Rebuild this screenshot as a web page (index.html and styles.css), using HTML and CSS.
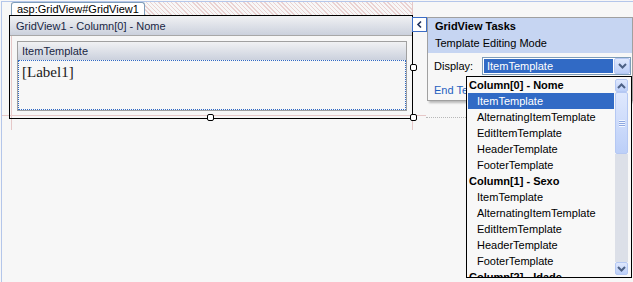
FILE: index.html
```html
<!DOCTYPE html>
<html lang="en">
<head>
  <meta charset="UTF-8" />
  <title>GridView Template Editing</title>
  <link rel="stylesheet" href="styles.css">
</head>
<body>
  <div class="surface">
    <div class="canvas">
      <div class="guide guide-h"></div>
      <div class="guide guide-v1"></div>
      <div class="guide guide-v2"></div>
      <div class="guide-dots"></div>

      <div class="tagrow"><span class="tag">asp:GridView#GridView1</span></div>
      <div class="grid-ctl">
        <div class="ctl-head">GridView1 - Column[0] - Nome</div>
        <div class="tmpl">
          <div class="tmpl-head">ItemTemplate</div>
          <div class="tmpl-body"><span class="label">[Label1]</span></div>
        </div>
        <span class="handle h-right"></span>
        <span class="handle h-bottom"></span>
        <span class="handle h-corner"></span>
      </div>
    </div>
  </div>

  <!-- smart tag popup -->
  <div class="smart">
    <div class="smart-btn">
      <svg width="13" height="13" viewBox="0 0 13 13"><polyline points="8,3.5 5,6.5 8,9.5" fill="none" stroke="#1d2f5a" stroke-width="1.6"/></svg>
    </div>
    <div class="tasks">
      <div class="tasks-head">
        <div class="tasks-title">GridView Tasks</div>
        <div>Template Editing Mode</div>
      </div>
      <div class="tasks-body">
        <div class="row">
          <span class="row-label">Display:</span>
          <div class="combo">
            <span class="combo-val">ItemTemplate</span>
            <span class="xp-btn combo-btn">
              <svg width="9" height="6" viewBox="0 0 9 6"><polyline points="1,1 4.5,4.5 8,1" fill="none" stroke="#4d6185" stroke-width="2"/></svg>
            </span>
          </div>
        </div>
        <a class="end-link">End Template Editing</a>
      </div>
    </div>
  </div>

  <!-- open dropdown -->
  <div class="list">
    <div class="items">
      <div class="opt grp">Column[0] - Nome</div>
      <div class="opt sel">ItemTemplate</div>
      <div class="opt">AlternatingItemTemplate</div>
      <div class="opt">EditItemTemplate</div>
      <div class="opt">HeaderTemplate</div>
      <div class="opt">FooterTemplate</div>
      <div class="opt grp">Column[1] - Sexo</div>
      <div class="opt">ItemTemplate</div>
      <div class="opt">AlternatingItemTemplate</div>
      <div class="opt">EditItemTemplate</div>
      <div class="opt">HeaderTemplate</div>
      <div class="opt">FooterTemplate</div>
      <div class="opt grp">Column[2] - Idade</div>
    </div>
    <div class="sb">
      <span class="xp-btn sb-btn">
        <svg width="9" height="6" viewBox="0 0 9 6"><polyline points="1,5 4.5,1.5 8,5" fill="none" stroke="#4d6185" stroke-width="2"/></svg>
      </span>
      <span class="xp-btn sb-thumb"><span class="grip"></span></span>
      <span class="sb-track"></span>
      <span class="xp-btn sb-btn">
        <svg width="9" height="6" viewBox="0 0 9 6"><polyline points="1,1 4.5,4.5 8,1" fill="none" stroke="#4d6185" stroke-width="2"/></svg>
      </span>
    </div>
  </div>
</body>
</html>
```

FILE: styles.css
```css
body { margin: 0; height: 282px; overflow: hidden; position: relative; background: #f7f7f7; font: 11px "Liberation Sans", Arial, sans-serif; color: #000; }

.surface { margin: 1px 0 0 1px; height: 280px; border-top: 1px solid #b4c6ea; border-left: 1px solid #b4c6ea; }
.canvas { position: relative; padding-left: 7px; }

/* design-time guides */
.guide { position: absolute; background: #e6c8c8; }
.guide-h { left: 0; top: 113px; width: 424px; height: 1px; }
.guide-v1 { left: 9px; top: 0; width: 1px; height: 128px; }
.guide-v2 { left: 410px; top: 0; width: 1px; height: 128px; }
.guide-dots { position: absolute; left: 424px; top: 115px; width: 40px; border-top: 1px dotted #b8b8b8; }

.tagrow { position: relative; margin-left: 2px; width: 401px; height: 13px; display: flex; align-items: flex-end;
  background: repeating-linear-gradient(45deg, #f7f7f7 0 2px, #ead2d2 2px 3px); }
.tag { height: 12px; line-height: 12px; padding: 0 5px; background: #fff; border: 1px solid #7f9db9; border-bottom: 0; border-radius: 3px 3px 0 0; }

.grid-ctl { position: relative; width: 402px; height: 102px; border: 1px solid #000; }
.ctl-head, .tmpl-head {
  background: linear-gradient(rgba(247,247,247,.85), rgba(247,247,247,0)),
              radial-gradient(circle, #b3bccf 0.6px, transparent 0.9px) 0 0 / 2px 2px, #f7f7f7;
}
.ctl-head { height: 19px; line-height: 20px; padding-left: 6px; border-bottom: 1px solid #a8a8a8; color: #1a2744; }
.tmpl { margin: 5px 5px 0 7px; border: 1px solid #a0a0a0; }
.tmpl-head { height: 18px; line-height: 18px; padding-left: 4px; color: #1a2744; }
.tmpl-body { height: 48px; border: 1px dotted #316ac5; background: #f7f7f7; }
.label { display: block; padding: 3px 0 0 3px; font: 15px "Liberation Serif", "Times New Roman", serif; color: #1a1a1a; }

.handle { position: absolute; width: 5px; height: 5px; border: 1px solid #000; border-radius: 2px; background: #fff; }
.h-right { left: 400px; top: 48px; }
.h-bottom { left: 197px; top: 98px; }
.h-corner { left: 400px; top: 98px; }

/* smart tag */
.smart { position: absolute; left: 412px; top: 17px; display: flex; align-items: flex-start; }
.smart-btn { width: 13px; height: 13px; border: 1px solid #3c6dc5; background: #fff; display: flex; }
.tasks { width: 204px; height: 82px; border: 1px solid #a0a0a0; background: #f7f7f7; box-shadow: 2px 2px 2px rgba(0,0,0,.25); }
.tasks-head { height: 35px; padding-left: 7px; line-height: 17px; background: #c6d5f2; }
.tasks-title { font-weight: bold; }
.tasks-body { padding: 4px 0 0 6px; }
.row { display: flex; align-items: center; height: 18px; }
.row-label { width: 48px; }
.combo { width: 147px; height: 16px; border: 1px solid #7f9db9; background: #fff; display: flex; }
.combo-val { flex: 1; margin: 1px; padding-left: 3px; line-height: 14px; background: #316ac5; color: #fff; }
.xp-btn { box-sizing: border-box; display: flex; align-items: center; justify-content: center; border: 1px solid #b5c8f3; border-radius: 2px; background: linear-gradient(#dfe8fd, #bccff8); }
.combo-btn { width: 16px; height: 16px; }
.end-link { display: block; width: 32px; margin-top: 7px; line-height: 16px; overflow: hidden; white-space: nowrap; color: #1f5fbf; }

/* dropdown list */
.list { position: absolute; left: 466px; top: 76px; width: 164px; height: 200px; border: 1px solid #000; background: #f8f8f8; display: flex; overflow: hidden; }
.items { width: 147px; }
.opt { height: 16px; line-height: 16px; padding-left: 10px; white-space: nowrap; }
.grp { padding-left: 2px; font-weight: bold; }
.sel { margin-left: 1px; padding-left: 9px; background: #316ac5; color: #fff; }
.sb { width: 17px; box-sizing: border-box; padding: 2px 3px 2px 1px; display: flex; flex-direction: column; }
.sb-btn { height: 13px; }
.sb-thumb { height: 62px; }
.grip { width: 6px; height: 7px; background: repeating-linear-gradient(#f2f6ff 0 1px, #8ea8e0 1px 2px); }
.sb-track { flex: 1; background: radial-gradient(circle, #cfd5e2 0.6px, transparent 0.9px) 0 0 / 2px 2px, #f4f4f4; }
```
